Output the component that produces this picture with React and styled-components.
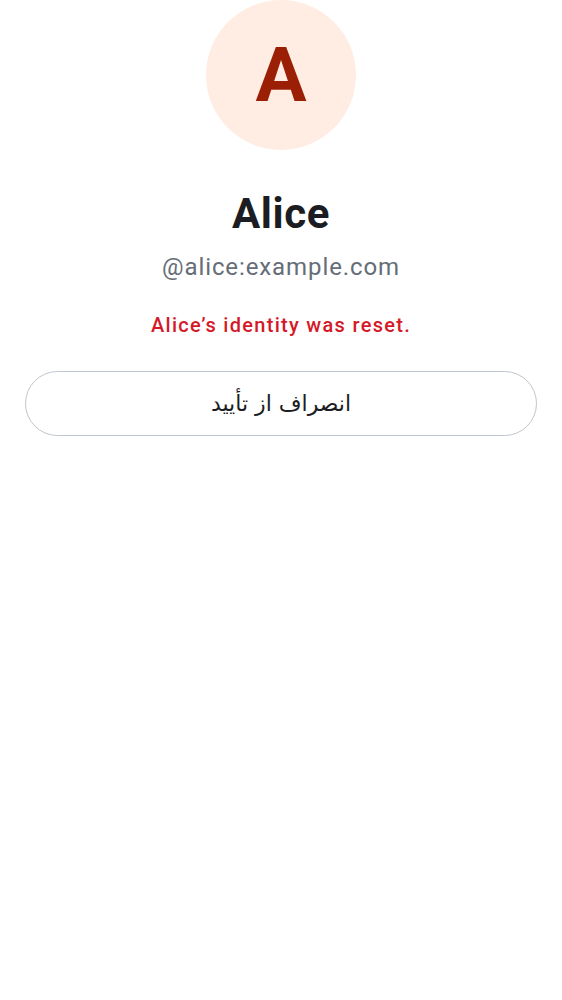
import styled, { createGlobalStyle } from 'styled-components';

const GlobalStyle = createGlobalStyle`
  html, body {
    margin: 0;
    padding: 0;
    background: #ffffff;
  }
  body {
    font-family: Roboto, "Noto Sans", "DejaVu Sans", sans-serif;
  }
`;

const Page = styled.main`
  display: flex;
  flex-direction: column;
  align-items: center;
  padding: 0 25px;
`;

const Avatar = styled.div`
  width: 150px;
  height: 150px;
  border-radius: 50%;
  background: #ffede3;
  color: #9b1f05;
  display: flex;
  align-items: center;
  justify-content: center;
  font-family: Roboto, sans-serif;
  font-weight: 700;
  font-size: 76px;
`;

const Name = styled.h1`
  margin: 38px 0 0;
  font-family: Roboto, sans-serif;
  font-size: 42px;
  line-height: 52px;
  font-weight: 700;
  letter-spacing: 0.6px;
  color: #1b1d22;
`;

const UserId = styled.div`
  margin-top: 12px;
  font-family: Roboto, sans-serif;
  font-size: 24px;
  line-height: 30px;
  letter-spacing: 0.9px;
  color: #656d77;
`;

const Warning = styled.p`
  margin: 30px 0 0;
  font-family: Roboto, sans-serif;
  font-size: 20px;
  line-height: 26px;
  font-weight: 500;
  letter-spacing: 1.3px;
  color: #d51928;
`;

const Button = styled.button`
  margin-top: 33px;
  width: 100%;
  height: 65px;
  border: 1px solid #c0c6cd;
  border-radius: 999px;
  background: #ffffff;
  color: #1b1d22;
  font-family: "DejaVu Sans", "Noto Sans", sans-serif;
  font-size: 22px;
  cursor: pointer;
`;

export default function App() {
  return (
    <>
      <GlobalStyle />
      <Page>
        <Avatar>A</Avatar>
        <Name>Alice</Name>
        <UserId>@alice:example.com</UserId>
        <Warning>Alice’s identity was reset.</Warning>
        <Button dir="rtl">انصراف از تأیید</Button>
      </Page>
    </>
  );
}
